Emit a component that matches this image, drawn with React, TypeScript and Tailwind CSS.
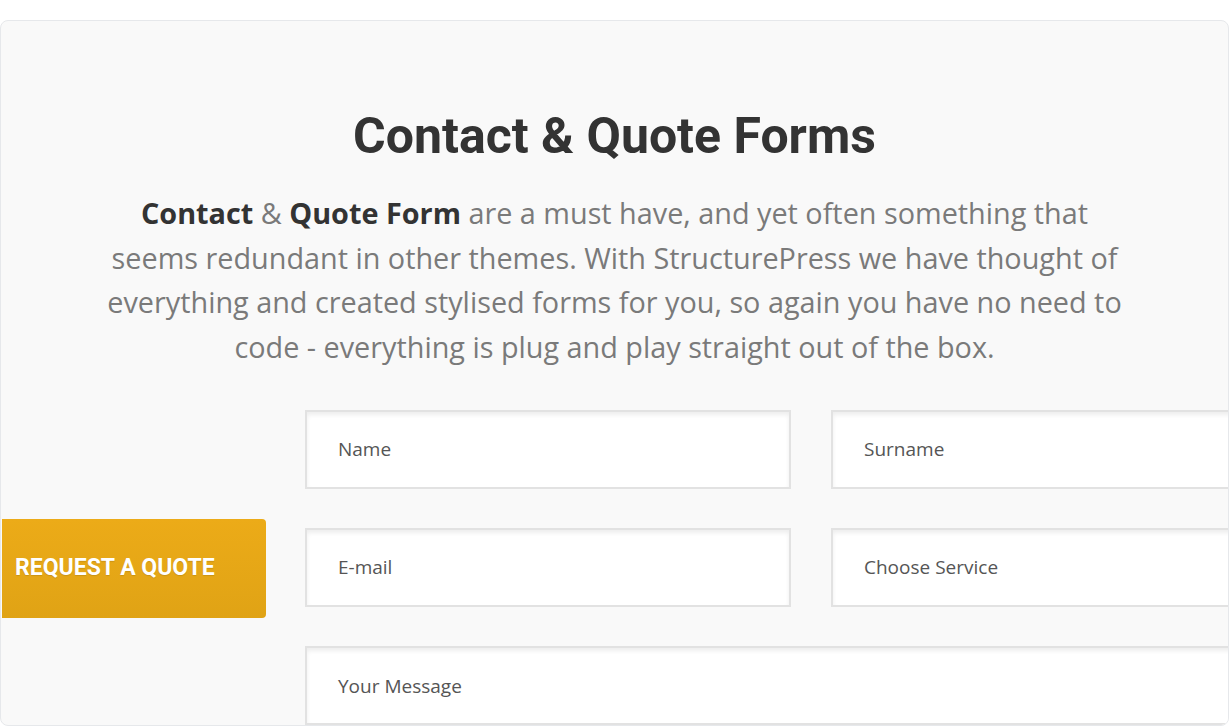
const fields = [
  { label: 'Name' },
  { label: 'Surname' },
  { label: 'E-mail' },
  { label: 'Choose Service' },
];

function Field({ label, wide }: { label: string; wide?: boolean }) {
  return (
    <div
      className={`h-[79px] bg-white border-2 border-[#e2e2e2] shadow-[inset_0_3px_4px_rgba(0,0,0,0.07)] flex items-center pl-[31px] text-[19px] text-[#555] ${
        wide ? 'col-span-2 items-start pt-[24px]' : ''
      }`}
    >
      {label}
    </div>
  );
}

export default function App() {
  return (
    <div className="bg-white pt-[20px] h-[726px] overflow-hidden" style={{ fontFamily: '"Open Sans", sans-serif' }}>
      <div className="w-[1229px] h-[706px] bg-[#f9f9f9] border border-[#e6e8eb] rounded-lg overflow-hidden">
        <h2
          className="mt-[86px] text-center text-[50px] leading-[58px] font-bold text-[#333]"
          style={{ fontFamily: 'Roboto, sans-serif' }}
        >
          Contact &amp; Quote Forms
        </h2>
        <p className="mt-[26px] mx-auto w-[1022px] text-center text-[28.8px] leading-[44.7px] text-[#7a7a7a]">
          <strong className="text-[#333] font-bold">Contact</strong> &amp;{' '}
          <strong className="text-[#333] font-bold">Quote Form</strong> are a must have, and yet often something that
          seems redundant in other themes. With StructurePress we have thought of everything and created stylised
          forms for you, so again you have no need to code - everything is plug and play straight out of the box.
        </p>

        <div className="flex mt-[40px]">
          <div className="w-[304px] shrink-0 pt-[109px]">
            <button
              className="ml-px w-[264px] h-[99px] rounded-r bg-gradient-to-b from-[#ecab18] to-[#e0a315] text-white text-left pl-[13px] text-[23px] font-bold uppercase"
              style={{ fontFamily: 'Roboto, sans-serif', textShadow: '0 1px 1px rgba(0,0,0,0.12)' }}
            >
              Request a Quote
            </button>
          </div>
          <div className="grid grid-cols-[486px_486px] gap-x-10 gap-y-[39px] shrink-0">
            {fields.map((f) => (
              <Field key={f.label} label={f.label} />
            ))}
            <Field label="Your Message" wide />
          </div>
        </div>
      </div>
    </div>
  );
}
